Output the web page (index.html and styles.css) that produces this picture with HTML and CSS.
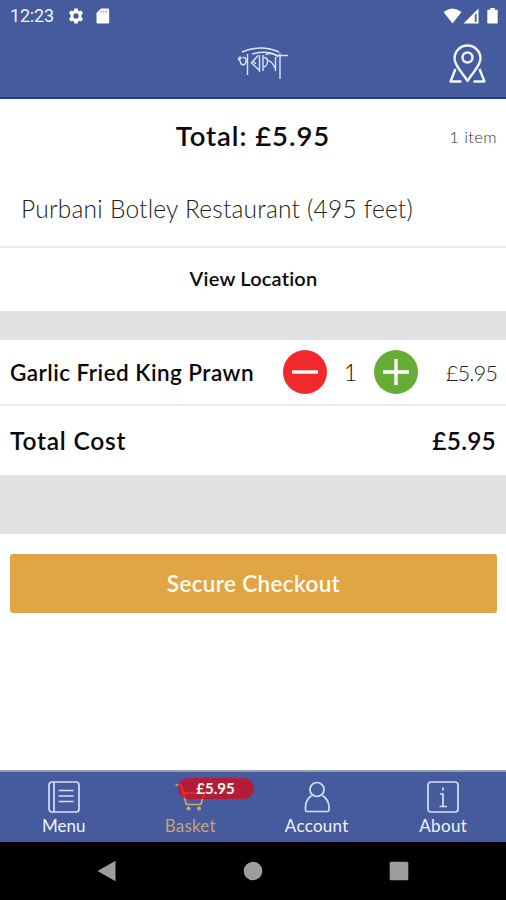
FILE: index.html
```html
<!DOCTYPE html>
<html lang="en">
<head>
<meta charset="utf-8">
<title>Basket</title>
<link rel="stylesheet" href="styles.css">
</head>
<body>
<header class="header">
  <div class="status">
    <span class="clock">12:23</span>
    <svg class="gear" width="16" height="16" viewBox="0 0 16 16"><path fill-rule="evenodd" d="M6.4.4h3.2l.5 2.1 1.2.7 2.1-.7 1.600 2.800L13.400 6.800v2.400l1.600 1.500-1.600 2.800-2.100-.7-1.200.7-.5 2.100H6.400l-.5-2.100-1.200-.7-2.100.7L1 10.700l1.600-1.500V6.800L1 5.300l1.600-2.800 2.100.7 1.200-.7zM8 5.300a2.700 2.700 0 1 0 0 5.400 2.700 2.700 0 0 0 0-5.400z"/></svg>
    <svg class="sd" width="14" height="16" viewBox="0 0 14 16"><path d="M5 .5h7q1.200 0 1.200 1.200v12.600q0 1.200-1.200 1.200H1.700Q.5 15.500.5 14.300V5z"/><path class="slots" d="M5.200 2.500v2M7.800 2.500v2M10.400 2.500v2"/></svg>
    <span class="spacer"></span>
    <svg width="19" height="16" viewBox="0 0 19 16"><path d="M.5 4Q9.500-3 18.500 4L9.500 15.500z"/></svg>
    <svg class="signal" width="16" height="16" viewBox="0 0 16 16"><path fill-rule="evenodd" d="M.5 15.500L15.500.5v15zM11.800 7v7h1.800V5z"/></svg>
    <svg class="battery" width="11" height="16" viewBox="0 0 11 16"><path d="M3.300 0h4.400v1.700H10q.7 0 .7.700v12.400q0 .7-.7.700H1q-.7 0-.7-.7V2.400q0-.7.7-.7h2.300z"/></svg>
  </div>
  <div class="appbar">
    <svg class="logo" width="70" height="38" viewBox="-15 4 70 38" aria-label="Purbani"><path d="M8 12Q27 4 45 12"/><path d="M18 14Q34 10 42 15.500H54"/><path d="M4 20l2-3 1.500 2M5 18l2 6 3 1M8.500 17.500q4-.5 3.500 3.500t-3 4M13.500 14v21M24 15.500L17.500 23 25 30M25.500 15v17M19 21l3 3M29 15v16M30 17.500q4 .5 3.500 4.500t-3.500 5M34 21q3-1 7 7M41.500 17v14M31.500 14.500Q40 12 44 17M46 13.500V39"/></svg>
    <svg class="pin" width="40" height="42" viewBox="0 0 40 42"><path d="M19.500 37C15 29 6.500 22 6.500 14.500a13 13 0 0 1 26 0C32.500 22 24 29 19.500 37z"/><circle cx="19.500" cy="13.500" r="5"/><path d="M7.500 25L2.500 37.500h11M31.500 25l5 12.500h-11"/></svg>
  </div>
</header>
<main>
  <section class="summary">
    <h1><span>Total: £5.95</span></h1>
    <span class="count">1 item</span>
  </section>
  <p class="place"><span>Purbani Botley Restaurant (495 feet)</span></p>
  <a class="location"><span>View Location</span></a>
  <div class="gap gap-small"></div>
  <section class="item">
    <span class="item-name">Garlic Fried King Prawn</span>
    <svg class="round minus" width="44" height="44" viewBox="0 0 44 44"><circle cx="22" cy="22" r="22"/><path d="M9 22h26"/></svg>
    <span class="qty">1</span>
    <svg class="round plus" width="44" height="44" viewBox="0 0 44 44"><circle cx="22" cy="22" r="22"/><path d="M9 22h26M22 9v26"/></svg>
    <span class="price">£5.95</span>
  </section>
  <section class="total">
    <span class="total-label">Total Cost</span>
    <span class="total-price">£5.95</span>
  </section>
  <div class="gap gap-large"></div>
  <button class="checkout"><span>Secure Checkout</span></button>
</main>
<nav class="tabs">
  <a class="tab"><svg width="32" height="32" viewBox="0 0 32 32"><rect x="1" y="1" width="30" height="30" rx="3"/><path d="M6 1v30M10.500 9.500h15M10.500 15h15M10.500 20.500h15"/></svg><span class="t-menu">Menu</span></a>
  <a class="tab active"><svg width="32" height="32" viewBox="0 0 32 32"><path d="M1.500 4h5l6 19.500h14.500l3-11.500H9"/><circle class="wheel" cx="14.500" cy="27.500" r="2"/><circle class="wheel" cx="25" cy="27.500" r="2"/></svg><span class="t-basket">Basket</span><b class="badge"><svg width="76" height="21" viewBox="0 0 76 21" aria-hidden="true"><path class="handle" d="M0 8h2.800l4 13M5.500 16h20.700l-1.500 5"/></svg><span>£5.95</span></b></a>
  <a class="tab"><svg width="32" height="32" viewBox="0 0 32 32"><circle cx="16" cy="8.500" r="7"/><path d="M10.500 14.500C6.500 17.500 4.500 21 4.500 26v3q0 1.500 1.500 1.500h20.500q1.500 0 1.500-1.500v-3c0-5-2-8.500-6.500-11.500"/></svg><span class="t-account">Account</span></a>
  <a class="tab"><svg width="32" height="32" viewBox="0 0 32 32"><rect x="1" y="1" width="30" height="30" rx="3"/><path d="M13 13h3v12M12.500 25.500h7.500M16 6.500v3"/></svg><span class="t-about">About</span></a>
</nav>
<footer class="system">
  <svg width="20" height="22" viewBox="0 0 20 22"><path d="M18.500.8v20.400L.5 11z"/></svg>
  <svg width="20" height="20" viewBox="0 0 20 20"><circle cx="10" cy="10" r="9.300"/></svg>
  <svg width="20" height="20" viewBox="0 0 20 20"><rect x=".7" y=".7" width="18.600" height="18.600" rx="1.500"/></svg>
</footer>
</body>
</html>
```

FILE: styles.css
```css
* { box-sizing: border-box; }
body {
  margin: 0;
  width: 506px;
  height: 900px;
  display: flex;
  flex-direction: column;
  overflow: hidden;
  background: #fff;
  color: #0a0a0a;
  font-family: Lato, "Open Sans", sans-serif;
  font-variant-ligatures: none;
  white-space: nowrap;
}
svg { display: block; flex: none; }
.header {
  height: 99px;
  background: #455b9d;
  border-bottom: 2px solid #1f418c;
}
.status {
  display: flex;
  align-items: center;
  height: 32px;
  padding: 0 8px 0 10px;
  color: #eff3ff;
  font: 400 18px/32px Roboto, sans-serif;
}
.status svg { fill: #fff; }
.clock { width: 58px; letter-spacing: -.2px; }
.sd { margin-left: 12px; }
.slots { stroke: #8e9bc4; stroke-width: 1.2; }
.spacer { flex: 1; }
.signal { margin-left: 1px; }
.battery { margin-left: 8px; }
.appbar {
  display: grid;
  grid-template-columns: 1fr 70px 1fr;
  height: 65px;
  padding: 12px 18px 0 20px;
}
.appbar svg { fill: none; stroke: #f3f6ff; }
.logo { grid-column: 2; }
.appbar .logo { stroke: #dce5fa; stroke-width: 1.4; }
.pin { justify-self: end; stroke-width: 2.4; stroke-linejoin: round; }
.summary {
  display: grid;
  grid-template-columns: 1fr auto 1fr;
  align-items: center;
  height: 74px;
  padding: 0 10px;
}
h1 {
  grid-column: 2;
  margin: 0;
  padding-bottom: 2px;
  font-size: 27.500px;
  font-weight: 600;
  letter-spacing: .95px;
}
.count { justify-self: end; font-size: 16.500px; font-weight: 300; letter-spacing: .4px; color: #333; padding-top: 1px; margin-right: -1px; }
.place {
  display: flex;
  align-items: center;
  height: 75px;
  margin: 0;
  padding: 0 20px 2px 21px;
  border-bottom: 2px solid #ececee;
  font-size: 24.500px;
  font-weight: 300;
  letter-spacing: .23px;
  color: #222;
}
.location {
  display: flex;
  align-items: center;
  justify-content: center;
  height: 63px;
  padding: 0 0 3px 1px;
  font-size: 20px;
  font-weight: 600;
  letter-spacing: .2px;
}
.gap { background: #e2e2e4; }
.gap-small { height: 29px; }
.gap-large { height: 59px; }
.item {
  display: flex;
  align-items: center;
  height: 66px;
  padding: 0 9px 0 10px;
  border-bottom: 2px solid #ececee;
}
.item-name { width: 273px; font-size: 22.500px; font-weight: 600; letter-spacing: .46px; }
.round path { stroke: #fff; stroke-width: 3.4; }
.minus { fill: #f1292c; }
.plus { fill: #66ad36; }
.qty { width: 47px; text-align: center; font-size: 22.500px; font-weight: 300; }
.price { margin-left: auto; font-size: 22px; font-weight: 300; color: #222; letter-spacing: -1px; }
.total {
  display: flex;
  align-items: center;
  justify-content: space-between;
  height: 69px;
  padding: 0 10px;
  font-size: 24.500px;
  font-weight: 600;
}
.total-label { letter-spacing: .8px; }
.total-price { letter-spacing: .2px; }
.checkout {
  display: block;
  width: 487px;
  height: 59px;
  margin: 20px 10px 0;
  padding: 0;
  border: 0;
  border-radius: 3px;
  background: #e2a545;
  color: #fffdf5;
  font: 600 22.500px/59px Lato, sans-serif;
  letter-spacing: .34px;
}
.tabs {
  display: grid;
  grid-template-columns: repeat(4, 1fr);
  height: 72px;
  margin-top: auto;
  border-top: 2px solid #969da6;
  background: #455b9d;
}
.tab {
  position: relative;
  display: flex;
  flex-direction: column;
  align-items: center;
  padding: 9px 0 0 1px;
  color: #eef4ff;
  font-size: 17px;
  font-weight: 400;
  line-height: 24px;
}
.tab > svg { fill: none; stroke: #d5e0f8; stroke-width: 1.700; }
.tab > span { padding-top: 1px; }
.t-account { letter-spacing: .3px; }
.t-about { letter-spacing: .4px; }
.t-basket { letter-spacing: .2px; }
.active { color: #c8a176; }
.active > svg { stroke: #d2aa6b; }
.active .wheel { fill: #d2aa6b; stroke: none; }
.badge {
  position: absolute;
  left: 51px;
  top: 6px;
  width: 76px;
  height: 21px;
  border-radius: 11px;
  background: #b41d38;
  color: #fff;
  font-size: 15px;
  line-height: 21px;
  text-align: center;
}
.badge svg { position: absolute; left: 0; top: -1px; }
.handle { fill: none; stroke: #ed2d24; stroke-width: 1.700; }
.badge span { position: relative; }
.system {
  display: flex;
  align-items: center;
  justify-content: center;
  gap: 126px;
  height: 58px;
  background: #000;
}
.system svg { fill: #9d9d9d; }
```
